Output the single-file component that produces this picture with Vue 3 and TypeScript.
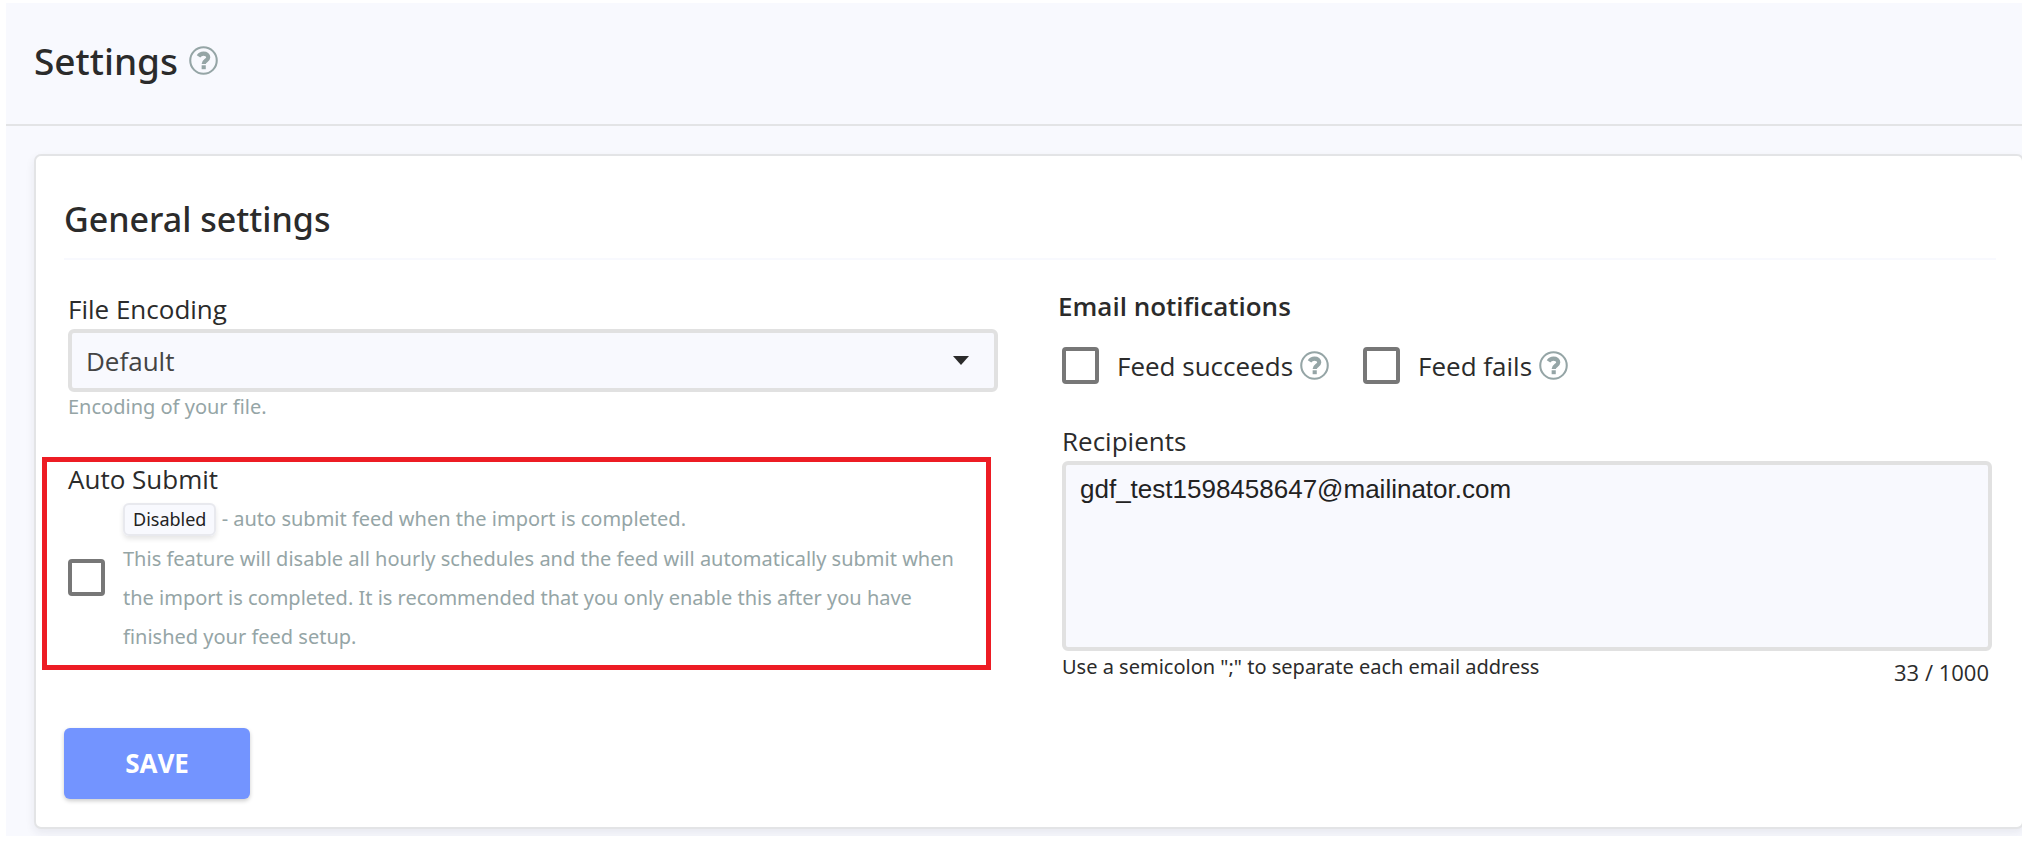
<script setup lang="ts">
import { computed, defineComponent, h, ref } from 'vue'

const encoding = ref('Default')
const autoSubmit = ref(false)
const feedSucceeds = ref(false)
const feedFails = ref(false)
const recipients = ref('gdf_test1598458647@mailinator.com')
const maxLength = 1000
const counter = computed(() => `${recipients.value.length} / ${maxLength}`)

const HelpIcon = defineComponent({
  render: () =>
    h('svg', { viewBox: '0 0 28 28', fill: 'none', stroke: 'currentColor', role: 'img', 'aria-label': 'Help' }, [
      h('circle', { cx: 14, cy: 14, r: 12.8, 'stroke-width': 2 }),
      h('path', { d: 'M9.2 10.1C10.4 8.2 12 7.4 14 7.4C16.8 7.4 18.6 8.8 18.6 10.9C18.6 14 14.2 14 14.2 17.4', 'stroke-width': 4 }),
      h('path', { d: 'M14.2 18.6V22.4', 'stroke-width': 4 }),
    ]),
})
</script>

<template>
  <div class="page">
    <header class="page-header">
      <h1>Settings</h1>
      <HelpIcon class="help" />
    </header>
    <main>
      <form class="card" @submit.prevent>
        <h2>General settings</h2>
        <div class="columns">
          <section class="column">
            <div class="field encoding">
              <label for="encoding">File Encoding</label>
              <div class="select-wrap">
                <select id="encoding" v-model="encoding">
                  <option>Default</option>
                  <option>UTF-8</option>
                </select>
                <svg class="caret" viewBox="0 0 16 9" aria-hidden="true"><path d="M0 0H16L8 9Z" fill="currentColor" /></svg>
              </div>
              <p class="hint">Encoding of your file.</p>
            </div>
            <div class="auto-submit">
              <label for="auto-submit">Auto Submit</label>
              <div class="auto-row">
                <input id="auto-submit" v-model="autoSubmit" type="checkbox" aria-describedby="auto-help" />
                <div id="auto-help" class="auto-help">
                  <p><span class="badge">{{ autoSubmit ? 'Enabled' : 'Disabled' }}</span> - auto submit feed when the import is completed.</p>
                  <p>This feature will disable all hourly schedules and the feed will automatically submit when the import is completed. It is recommended that you only enable this after you have finished your feed setup.</p>
                </div>
              </div>
            </div>
          </section>
          <section class="column">
            <h3>Email notifications</h3>
            <div class="checks">
              <div class="check">
                <input id="succeeds" v-model="feedSucceeds" type="checkbox" />
                <label for="succeeds">Feed succeeds</label>
                <HelpIcon class="help" />
              </div>
              <div class="check">
                <input id="fails" v-model="feedFails" type="checkbox" />
                <label for="fails">Feed fails</label>
                <HelpIcon class="help" />
              </div>
            </div>
            <div class="field">
              <label for="recipients">Recipients</label>
              <textarea id="recipients" v-model="recipients" :maxlength="maxLength" spellcheck="false"></textarea>
              <div class="below">
                <p class="note">Use a semicolon ";" to separate each email address</p>
                <output class="counter" for="recipients">{{ counter }}</output>
              </div>
            </div>
          </section>
        </div>
        <button type="submit">SAVE</button>
      </form>
    </main>
  </div>
</template>

<style>
body {
  background: #fff;
}
</style>

<style scoped>
* {
  box-sizing: border-box;
}
h1, h2, h3, p {
  margin: 0;
}
.page {
  margin: 3px 8px 8px 6px;
  overflow: hidden;
  background: #f8f9fe;
  color: #2b2b2b;
  font: 26px/34px "Open Sans", "Noto Sans", sans-serif;
}
.page-header {
  display: flex;
  align-items: center;
  gap: 11px;
  height: 123px;
  padding: 0 28px 6px;
  border-bottom: 2px solid #e3e4e6;
}
h1,
h2 {
  font-family: "Noto Sans", "Open Sans", sans-serif;
  font-weight: 500;
}
h1 {
  font-size: 37px;
  line-height: 48px;
}
.help {
  flex: none;
  width: 29px;
  height: 29px;
  color: #95a5a6;
}
main {
  padding: 28px 0 7px 28px;
}
.card {
  margin-right: -2px;
  padding: 40px 26px 28px 28px;
  border: 2px solid #e3e4e6;
  border-radius: 7px;
  background: #fff;
  box-shadow: 0 4px 10px rgba(40, 40, 60, 0.08);
}
h2 {
  padding-bottom: 16px;
  border-bottom: 2px solid #f8f9fe;
  font-size: 34px;
  line-height: 46px;
}
.columns {
  display: grid;
  grid-template-columns: 1fr 1fr;
  gap: 64px;
  padding: 30px 4px 0 4px;
}
.field {
  display: flex;
  flex-direction: column;
}
.encoding {
  padding-top: 2px;
}
.select-wrap {
  display: grid;
  align-items: center;
  margin-top: 3px;
}
.select-wrap > * {
  grid-area: 1 / 1;
}
select {
  appearance: none;
  width: 100%;
  height: 63px;
  padding: 0 48px 0 14px;
  border: 4px solid #e1e1e1;
  border-radius: 6px;
  background: #f8f9fe;
  color: #444;
  font: 26px/34px "Open Sans", sans-serif;
}
.caret {
  justify-self: end;
  width: 16px;
  height: 9px;
  margin-right: 29px;
  color: #2b2b2b;
  pointer-events: none;
}
.hint,
.auto-help,
.note {
  font-family: "Noto Sans", "Open Sans", sans-serif;
  font-size: 20px;
}
.hint {
  color: #95a5a6;
  line-height: 30px;
}
.auto-submit {
  margin: 35px 7px 0 -26px;
  padding: 0 10px 9px 21px;
  border: 5px solid #ed1c24;
}
.auto-submit label {
  display: block;
}
.auto-row {
  display: flex;
  align-items: center;
  gap: 18px;
  margin-top: 3px;
}
.auto-help {
  color: #95a5a6;
  line-height: 39px;
}
.badge {
  padding: 2px 8px 3px;
  border: 2px solid #e8e9ee;
  border-radius: 6px;
  background: #f8f9fe;
  box-shadow: 0 3px 5px rgba(0, 0, 0, 0.1);
  color: #222;
  font-size: 18px;
}
input[type="checkbox"] {
  appearance: none;
  flex: none;
  width: 37px;
  height: 37px;
  margin: 0;
  border: 4px solid #777;
  border-radius: 4px;
  background: #fff;
}
input[type="checkbox"]:checked {
  background: #7394ff;
}
h3 {
  margin-left: -4px;
  font-size: 26px;
  font-weight: 600;
  line-height: 32px;
}
.checks {
  display: flex;
  gap: 34px;
  margin: 25px 0 40px;
}
.check {
  display: flex;
  align-items: center;
}
.check label {
  margin: 0 7px 0 18px;
}
textarea {
  height: 190px;
  margin-top: 3px;
  padding: 7px 14px;
  resize: none;
  border: 4px solid #e1e1e1;
  border-radius: 6px;
  background: #f8f9fe;
  color: #222;
  font: 26px/34px "Liberation Sans", Arial, sans-serif;
}
.below {
  display: flex;
  justify-content: space-between;
}
.note {
  line-height: 32px;
}
.counter {
  padding-top: 4px;
  padding-right: 3px;
  font-size: 22px;
}
button {
  display: block;
  width: 186px;
  height: 71px;
  margin-top: 39px;
  padding: 0 0 2px;
  border: 0;
  border-radius: 6px;
  background: #7394ff;
  box-shadow: 0 2px 4px rgba(0, 0, 0, 0.2);
  color: #fff;
  font: 700 26px/34px "Open Sans", sans-serif;
}
</style>
